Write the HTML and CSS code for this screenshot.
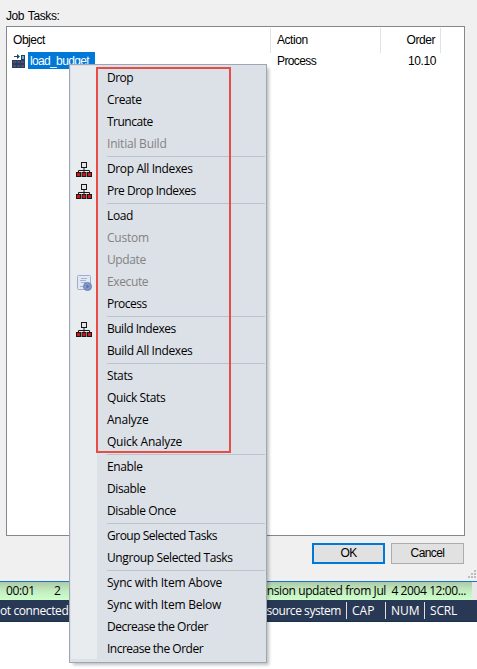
FILE: index.html
```html
<!DOCTYPE html>
<html lang="en">
<head>
<meta charset="utf-8">
<title>Job Tasks</title>
<link rel="stylesheet" href="styles.css">
</head>
<body>
<svg class="defs" width="0" height="0">
  <symbol id="tree" viewBox="0 0 16 16">
    <path d="M8 6V11M2.5 11V8.5H13.5V11" fill="none" stroke="#181818"/>
    <rect x="5.5" y=".5" width="5" height="5" fill="#e4e6e6" stroke="#181818"/>
    <g fill="#d01418" stroke="#181818"><rect x=".5" y="10.5" width="4" height="4"/><rect x="6" y="10.5" width="4" height="4"/><rect x="11.5" y="10.5" width="4" height="4"/></g>
  </symbol>
</svg>
<main class="dialog">
  <div class="label">Job Tasks:</div>
  <section class="list">
    <div class="row head"><span class="object">Object</span><span class="action">Action</span><span class="order">Order</span></div>
    <div class="row"><span class="object"><svg class="table-icon" width="14" height="14" viewBox="0 0 14 14"><path d="M0 6h9V1h4v13H0z" fill="#164669"/><path d="M2 2h3V0l3 2.5L5 5V3H2z" fill="#164669"/><path d="M10 2h2v3h-2z" fill="#76a9cf"/><path d="M1 7h3v2H1zM5 7h3v2H5zM9 7h3v2H9zM1 11h3v2H1zM5 11h3v2H5zM9 11h3v2H9z" fill="#713e68"/></svg><span class="selected">load_budget</span></span><span class="action">Process</span><span class="order value">10.10</span></div>
  </section>
  <div class="buttons"><button class="ok">OK</button><button>Cancel</button></div>
  <svg class="grip" width="9" height="9" viewBox="0 0 9 9"><path d="M6 0h2v2H6zM3 3h2v2H3zM6 3h2v2H6zM0 6h2v2H0zM3 6h2v2H3zM6 6h2v2H6z" fill="#bcbcbc"/></svg>
</main>
<div class="log"><span class="time">00:01</span><span class="count">2</span><span class="message">nsion updated from Jul&nbsp; 4 2004 12:00...</span></div>
<footer class="status"><span class="connection">ot connected</span><span class="source">source system</span><span class="key">CAP</span><span class="key">NUM</span><span class="key">SCRL</span></footer>

<nav class="menu">
  <div class="item tight">Drop</div>
  <div class="item">Create</div>
  <div class="item tight">Truncate</div>
  <div class="item off loose">Initial Build</div>
  <hr>
  <div class="item"><svg class="icon"><use href="#tree"/></svg>Drop All Indexes</div>
  <div class="item tight"><svg class="icon"><use href="#tree"/></svg>Pre Drop Indexes</div>
  <hr>
  <div class="item">Load</div>
  <div class="item off loose">Custom</div>
  <div class="item off">Update</div>
  <div class="item off"><svg class="icon" viewBox="0 0 16 16"><rect x="1.5" y=".5" width="13" height="14" rx="1" fill="#e1e8f4" stroke="#9daed2"/><path d="M5 3.5h6M4 5.5h6M5 7.5h5M4 11.5h4" stroke="#a2b3d5"/><circle cx="11.5" cy="11.5" r="4" fill="#8197c6" stroke="#6e82b2"/><path d="M10.5 9.5v4l3-2z" fill="#5a70a8"/></svg>Execute</div>
  <div class="item tight">Process</div>
  <hr>
  <div class="item tight"><svg class="icon"><use href="#tree"/></svg>Build Indexes</div>
  <div class="item">Build All Indexes</div>
  <hr>
  <div class="item">Stats</div>
  <div class="item">Quick Stats</div>
  <div class="item loose">Analyze</div>
  <div class="item loose">Quick Analyze</div>
  <hr>
  <div class="item">Enable</div>
  <div class="item">Disable</div>
  <div class="item">Disable Once</div>
  <hr>
  <div class="item tight">Group Selected Tasks</div>
  <div class="item">Ungroup Selected Tasks</div>
  <hr>
  <div class="item loose">Sync with Item Above</div>
  <div class="item loose">Sync with Item Below</div>
  <div class="item tight">Decrease the Order</div>
  <div class="item tight">Increase the Order</div>
  <div class="callout"></div>
</nav>
</body>
</html>
```
FILE: styles.css
```css
* { box-sizing: border-box; }
body { margin: 0; height: 669px; overflow: hidden; position: relative; background: #fff; color: #000; font: 12px/22px "Open Sans", "Noto Sans", sans-serif; }
.defs { position: absolute; }
.dialog { height: 582px; position: relative; background: #f0f0f0; border-bottom: 1px solid #1874c4; padding: 5px 12px 0 6px; font: 12px/22px "Liberation Sans", sans-serif; }
.label { height: 21px; line-height: 23px; letter-spacing: -.4px; word-spacing: 1px; }
.list { height: 510px; background: #fff; border: 1px solid #828790; padding-top: 1px; }
.row { height: 21px; display: grid; grid-template-columns: 264px 110px 60px; line-height: 18px; letter-spacing: -.6px; }
.head { height: 24px; line-height: 25px; letter-spacing: -.45px; }
.head span { border-right: 1px solid #e2e2e2; }
.object { display: flex; padding-left: 6px; }
.action { padding-left: 6px; }
.order { text-align: right; padding-right: 5px; }
.value { letter-spacing: -.4px; }
.table-icon { margin: 2px 2px 0 -1px; }
.selected { background: #0078d7; color: #fff; height: 17px; width: 67px; line-height: 18px; padding-left: 2px; letter-spacing: -.65px; }
.buttons { display: flex; justify-content: flex-end; gap: 6px; padding: 7px 1px 0 0; }
button { width: 73px; height: 21px; padding: 0; background: #e1e1e1; border: 1px solid #adadad; color: #000; font: 12px/19px "Liberation Sans", sans-serif; letter-spacing: -.6px; }
button.ok { border: 2px solid #0078d7; line-height: 17px; }
.grip { position: absolute; right: 0; bottom: 2px; }
.log { width: 472px; height: 18px; display: flex; padding: 0 6px; line-height: 17px; font-size: 12px; letter-spacing: -.4px; background: linear-gradient(#adcaa8, #c4edbf 50%, #ccffcc); box-shadow: 5px 0 #e8e8e8; }
.time { width: 48px; }
.message { margin-left: auto; white-space: pre; }
.status { height: 22px; display: flex; align-items: center; color: #fff; background: #293955; border-bottom: 1px solid #143450; font-size: 12px; }
.connection { flex: 1; letter-spacing: -.4px; }
.source { padding-right: 5px; letter-spacing: -.45px; }
.key { width: 39px; height: 17px; line-height: 17px; padding-left: 5px; border-left: 1px solid #dce1e8; }
.key:last-child { width: 53px; letter-spacing: -.2px; }
.menu { position: absolute; left: 69px; top: 64px; width: 198px; height: 599px; padding: 2px; border: 1px solid #9ba7b7; background: linear-gradient(90deg, #e9ecee 26px, #dce0e7 26px) 1px 1px / 194px 593px no-repeat #dce0e7; box-shadow: 3px 3px 3px -1px rgba(0,0,0,.25); }
.item { height: 22px; padding-left: 35px; position: relative; white-space: nowrap; line-height: 22px; letter-spacing: -.38px; }
.tight { letter-spacing: -.5px; }
.loose { letter-spacing: -.22px; }
.off { color: #838383; }
.icon { position: absolute; left: 4px; top: 4px; width: 16px; height: 16px; }
hr { height: 1px; margin: 1px -1px 1px 35px; border: 0; background: #bdc2cd; }
.callout { position: absolute; left: 26px; top: 2px; width: 135px; height: 386px; border: 2px solid #e84c46; }
```
